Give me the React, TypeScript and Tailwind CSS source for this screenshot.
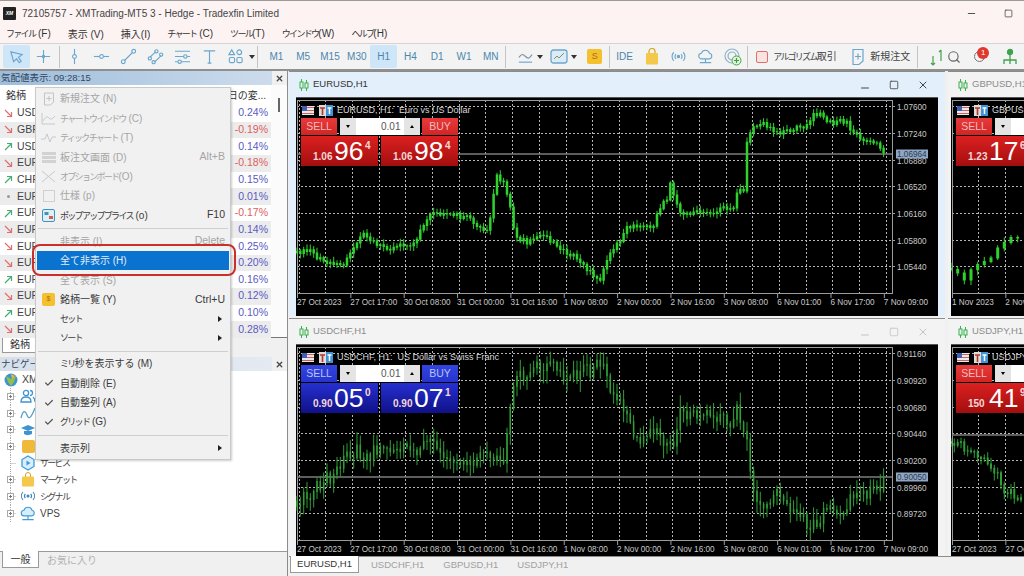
import React from 'react';
import { Check, Minus, Search, Square, X } from 'lucide-react';

type Pt = [number, number];

const eurusd: Pt[] = [[298,250],[310,248],[320,256],[332,262],[345,262],[357,240],[365,232],[375,240],[390,246],[400,244],[417,240],[426,218],[435,210],[450,212],[470,215],[480,224],[490,228],[497,172],[505,180],[512,208],[516,234],[528,240],[540,232],[552,238],[562,246],[575,254],[590,268],[600,280],[606,262],[612,248],[623,238],[627,224],[650,225],[655,222],[660,206],[668,196],[670,176],[675,195],[680,208],[688,212],[700,208],[712,210],[725,205],[735,204],[737,190],[745,188],[747,140],[755,125],[762,120],[770,125],[780,130],[790,128],[800,125],[810,122],[813,113],[822,112],[830,120],[836,122],[841,118],[848,120],[852,130],[860,135],[870,138],[880,142],[886,151]];
const usdchf: Pt[] = [[298,498],[310,492],[322,480],[333,472],[345,455],[358,446],[365,458],[375,446],[390,448],[400,446],[410,444],[420,450],[425,432],[433,434],[440,454],[450,456],[460,460],[470,460],[480,456],[490,450],[500,460],[505,456],[510,408],[517,368],[530,372],[540,362],[550,364],[560,366],[565,376],[575,372],[585,366],[592,368],[598,360],[606,358],[610,382],[618,396],[626,408],[635,432],[640,440],[650,432],[655,426],[665,442],[672,432],[676,450],[680,408],[695,413],[710,412],[720,415],[730,420],[737,404],[745,426],[748,432],[752,472],[757,495],[763,508],[773,492],[783,490],[790,505],[803,515],[808,522],[817,522],[827,502],[837,512],[855,492],[870,490],[880,484],[886,472]];
const gbpusd: Pt[] = [[951,266],[956,272],[961,275],[966,276],[970,272],[974,262],[981,258],[986,260],[992,252],[998,244],[1005,238],[1012,235],[1024,240]];
const usdjpy: Pt[] = [[951,438],[960,440],[968,450],[980,452],[990,460],[998,472],[1004,486],[1012,490],[1024,496]];

const buildCandles = (points: Pt[], step: number, noise: number, seed: number) => {
  const rnd = (i: number) => {
    const s = Math.sin(i * 12.9898 + seed) * 43758.5453;
    return s - Math.floor(s);
  };
  let wick = '';
  let body = '';
  let prev = points[0][1];
  let seg = 0;
  let i = 0;
  for (let x = points[0][0]; x <= points[points.length - 1][0]; x += step) {
    while (seg < points.length - 2 && x > points[seg + 1][0]) seg++;
    const [x1, y1] = points[seg];
    const [x2, y2] = points[seg + 1];
    const y = y1 + ((x - x1) / (x2 - x1)) * (y2 - y1) + (rnd(i) - 0.5) * noise;
    const top = Math.min(prev, y);
    const bottom = Math.max(prev, y) + 1;
    wick += `M${x.toFixed(1)} ${(top - rnd(i + 50) * noise * 0.9 - 1).toFixed(1)}V${(bottom + rnd(i + 90) * noise * 0.9 + 1).toFixed(1)}`;
    body += `M${x.toFixed(1)} ${top.toFixed(1)}V${bottom.toFixed(1)}`;
    prev = y;
    i++;
  }
  return { wick, body };
};

// kana in the reference font is narrow, so kana runs get a tighter setting
const Jp = ({ t }: { t: string }) => (
  <>
    {t.split(/([\u30A0-\u30FF]+)/).map((run, i) =>
      i % 2 ? (
        <span key={i} className="text-[9px] tracking-[-1.7px]">{run}</span>
      ) : (
        <span key={i}>{run}</span>
      ),
    )}
  </>
);

const timesA = ['27 Oct 2023', '27 Oct 17:00', '30 Oct 08:00', '31 Oct 00:00', '31 Oct 16:00', '1 Nov 08:00', '2 Nov 00:00', '2 Nov 16:00', '3 Nov 08:00', '6 Nov 01:00', '6 Nov 17:00', '7 Nov 09:00'];

interface ChartProps {
  left: number;
  top: number;
  data: Pt[];
  step: number;
  noise: number;
  seed: number;
  color: string;
  bodyWidth?: number;
  linePrice?: string;
  lineY?: number;
  prices?: string[];
  times: string[];
  gridStart: number;
  gridCount: number;
  frameRight: number;
}

const Chart = ({ left, top, data, step, noise, seed, color, bodyWidth = 2, linePrice, lineY, prices, times, gridStart, gridCount, frameRight }: ChartProps) => {
  const { wick, body } = buildCandles(data, step, noise, seed);
  const ys = [8, 35, 62, 88, 115, 142, 168];
  const xs = Array.from({ length: gridCount }, (_, i) => gridStart + i * 26.67);
  return (
    <svg className="block h-full w-full bg-black">
      <g fontSize="8.2" fill="#c9c9c9">
        {ys.map((y) => (
          <line key={y} x1="1" x2={frameRight} y1={y + 0.5} y2={y + 0.5} stroke="#b5b5b5" strokeDasharray="2 2" shapeRendering="crispEdges" />
        ))}
        {xs.map((x) => (
          <line key={x} x1={x} x2={x} y1="2" y2="196" stroke="#b5b5b5" strokeDasharray="2 2" shapeRendering="crispEdges" />
        ))}
        <rect x="1.5" y="2.5" width={frameRight - 1} height="193" fill="none" stroke="#9b9b9b" shapeRendering="crispEdges" />
        {lineY !== undefined && <line x1="1" x2={frameRight} y1={lineY} y2={lineY} stroke="#7d7d7d" strokeWidth="1.5" />}
        <g transform={`translate(${-left} ${-top})`}>
          <path d={wick} stroke={color} strokeWidth="1" fill="none" />
          <path d={body} stroke={color} strokeWidth={bodyWidth} fill="none" />
        </g>
        {prices?.map((p, i) => (
          <g key={p}>
            <line x1={frameRight} x2={frameRight + 3} y1={ys[i] + 0.5} y2={ys[i] + 0.5} stroke="#9b9b9b" />
            <text x={frameRight + 5} y={ys[i] + 3.5}>{p}</text>
          </g>
        ))}
        {linePrice && lineY !== undefined && (
          <g>
            <rect x={frameRight + 4} y={lineY - 4.5} width="32" height="9" fill="#8fa6c4" />
            <text x={frameRight + 5} y={lineY + 3} fill="#2c3a50">{linePrice}</text>
          </g>
        )}
        {times.map((t, i) => (
          <g key={t}>
            <line x1={1.5 + i * 53.35} x2={1.5 + i * 53.35} y1="196" y2="200" stroke="#9b9b9b" />
            <text x={1 + i * 53.35} y="206.5">{t}</text>
          </g>
        ))}
      </g>
    </svg>
  );
};

const FlagIcon = () => (
  <svg width="31" height="11" viewBox="0 0 31 11" className="shrink-0">
    <rect x="0" y="1" width="12" height="9" fill="#e9e9f2" />
    <path d="M0 2.500h12M0 5.500h12M0 8.500h12" stroke="#d2604f" strokeWidth="1.200" />
    <rect x="0" y="1" width="5" height="5" fill="#3d64b4" />
    <rect x="17" y="0" width="7" height="11" fill="#e0dcd8" />
    <path d="M18 3h5M20.500 3v7" stroke="#b5372c" strokeWidth="1.600" />
    <rect x="24" y="0" width="7" height="11" fill="#3f93d6" />
    <path d="M25.500 3h4M27.500 3v6" stroke="#fff" strokeWidth="1.500" />
  </svg>
);

const PriceBox = ({ big, small, sup, bg }: { big: string; small: string; sup: string; bg: string }) => (
  <div className={`relative h-[30px] w-[77px] ${bg}`}>
    <span className="absolute left-[12px] bottom-[4px] text-[10px] font-semibold leading-none text-[#f6d7d7]">{small}</span>
    <span className="absolute left-[33px] top-[1px] text-[26.500px] leading-[28px] text-white">{big}</span>
    <span className="absolute left-[64px] top-[5px] text-[10px] font-semibold leading-none text-[#f6d7d7]">{sup}</span>
  </div>
);

const OrderPanel = ({ tone, a, b }: { tone: 'red' | 'blue'; a: [string, string, string]; b: [string, string, string] }) => {
  const head = tone === 'red' ? 'bg-gradient-to-b from-[#e83a3a] to-[#d12424] text-[#f6bcbc]' : 'bg-gradient-to-b from-[#3344e0] to-[#2534cc] text-[#b9c2f6]';
  const box = tone === 'red' ? 'bg-gradient-to-b from-[#dc2020] to-[#a30e0e]' : 'bg-gradient-to-b from-[#2630d0] to-[#101088]';
  return (
    <div className="flex w-[157px] flex-col gap-px">
      <div className="flex h-[17px] items-stretch justify-between">
        <div className={`flex w-[36px] items-center justify-center text-[10.500px] ${head}`}>SELL</div>
        <div className="flex w-[80px] items-stretch bg-white text-[#333]">
          <div className="flex w-[16px] items-center justify-center bg-[#e4e4e4]">
            <span className="h-0 w-0 border-x-[2.500px] border-t-[3px] border-x-transparent border-t-black" />
          </div>
          <div className="flex-1 pr-[3px] text-right text-[10px] leading-[17px] text-[#555]">0.01</div>
          <div className="flex w-[16px] items-center justify-center bg-[#e4e4e4]">
            <span className="h-0 w-0 border-x-[2.500px] border-b-[3px] border-x-transparent border-b-black" />
          </div>
        </div>
        <div className={`flex w-[36px] items-center justify-center text-[10.500px] ${head}`}>BUY</div>
      </div>
      <div className="flex justify-between">
        <PriceBox bg={box} small={a[0]} big={a[1]} sup={a[2]} />
        <PriceBox bg={box} small={b[0]} big={b[1]} sup={b[2]} />
      </div>
    </div>
  );
};

const CandleIcon = () => (
  <svg width="10" height="12" viewBox="0 0 10 12" className="shrink-0">
    <path d="M2.500 0v12M7.500 1v11" stroke="#3caf50" />
    <rect x="1" y="3" width="3" height="6" fill="#e8f5e8" stroke="#3caf50" />
    <rect x="6" y="4" width="3" height="5" fill="#e8f5e8" stroke="#3caf50" />
  </svg>
);

const ChartWindow = ({ title, active, side, heading, panel, children }: { title: string; active?: boolean; side?: boolean; heading: string; panel: React.ReactNode; children: React.ReactNode }) => (
  <div className={`flex min-h-0 flex-col border-t border-[#8c8c8c] ${active ? 'bg-[#e3f0fb]' : 'bg-[#f3f3f3]'}`}>
    <div className="flex h-[25px] shrink-0 items-center pl-[10px]">
      <CandleIcon />
      <span className={`ml-[4px] text-[9.500px] ${active ? 'text-[#333]' : 'text-[#8b8b8b]'}`}>{title}</span>
      {!side && (
        <div className={`ml-auto flex items-center gap-[18px] pr-[16px] ${active ? 'text-[#444]' : 'text-[#c4c4c4]'}`}>
          <Minus size={12} className="translate-y-[3px]" />
          <Square size={10} strokeWidth={2} />
          <X size={12} strokeWidth={2} />
        </div>
      )}
    </div>
    <div className={`relative min-h-0 flex-1 overflow-hidden border-t border-[#555] bg-black ${side ? 'ml-[3px]' : 'mx-[7px]'}`}>
      {children}
      <div className="absolute left-[6px] top-[6px] flex items-center gap-[4px] whitespace-pre text-[9px] leading-[12px] text-[#d9d9d9]">
        <FlagIcon />
        <span>{heading}</span>
      </div>
      <div className="absolute left-[5px] top-[20px]">{panel}</div>
    </div>
  </div>
);

const Sep = ({ className = '' }: { className?: string }) => <div className={`h-[22px] w-px shrink-0 bg-[#c4c4c4] ${className}`} />;

const Caret = () => <span className="h-0 w-0 border-x-[3px] border-t-[4px] border-x-transparent border-t-[#333]" />;

const Tool = ({ w = 'w-[27px]', active, children }: { w?: string; active?: boolean; children: React.ReactNode }) => (
  <div className={`flex h-[23px] shrink-0 items-center justify-center rounded-[2px] ${w} ${active ? 'bg-[#cfe6f9]' : ''}`}>{children}</div>
);

const blue = '#6ba6cd';
const Ico = ({ children, size = 17 }: { children: React.ReactNode; size?: number }) => (
  <svg width={size} height={size} viewBox="0 0 18 18" fill="none" stroke={blue} strokeWidth="1.200">{children}</svg>
);

const frames = ['M1', 'M5', 'M15', 'M30', 'H1', 'H4', 'D1', 'W1', 'MN'];

const Toolbar = () => (
  <div className="flex h-[26px] shrink-0 items-center border-t border-[#d4d4d4] bg-[#f3f3f3] pl-[3px]">
    <Tool active>
      <Ico><path d="M3 4l12 3-4 3 3 4-2 1.500-3-4-3 3z" /></Ico>
    </Tool>
    <Tool>
      <Ico><path d="M9 2v14M2 9h14" /><circle cx="9" cy="9" r="1.200" fill={blue} /></Ico>
    </Tool>
    <Sep className="mx-[1.500px]" />
    <Tool>
      <Ico><path d="M9 1v16" /><circle cx="9" cy="9" r="2" fill="#fff" /></Ico>
    </Tool>
    <Tool>
      <Ico><path d="M1 9h16" /><circle cx="9" cy="9" r="2" fill="#fff" /></Ico>
    </Tool>
    <Tool>
      <Ico><path d="M4.500 13.500l9-9" /><circle cx="3.500" cy="14.500" r="2" /><circle cx="14.500" cy="3.500" r="2" /></Ico>
    </Tool>
    <Tool>
      <Ico><path d="M3 10l6-6M8 15l7-7" /><circle cx="3" cy="11" r="1.700" /><circle cx="10" cy="3.500" r="1.700" /><circle cx="7" cy="15" r="1.700" /><circle cx="15" cy="7" r="1.700" /></Ico>
    </Tool>
    <Tool>
      <Ico><path d="M1 3.500h16M1 9h9M14 9h3M1 14.500h3M8 14.500h9" /><circle cx="12" cy="9" r="1.800" /><circle cx="6" cy="14.500" r="1.800" /></Ico>
    </Tool>
    <Tool>
      <Ico><path d="M3 3h12M9 3v13M7 16h4" /></Ico>
    </Tool>
    <Tool w="w-[24px]">
      <Ico><path d="M5 2l3 5H2zM13 2a2.500 2.500 0 100 5 2.500 2.500 0 000-5z" /><rect x="2.500" y="10" width="5.500" height="5.500" rx="1.500" /><rect x="10.500" y="10" width="5.500" height="5.500" rx="1.500" /></Ico>
    </Tool>
    <Tool w="w-[9px]"><Caret /></Tool>
    <Sep className="ml-[1px] mr-[5px]" />
    <div className="flex">
      {frames.map((f) => (
        <Tool key={f} active={f === 'H1'} w="w-[26.800px]">
          <span className="text-[10px] text-[#4b87ad]">{f}</span>
        </Tool>
      ))}
    </div>
    <Sep className="ml-[1px] mr-[9px]" />
    <Tool w="w-[20px]">
      <Ico><path d="M2 10c3-4 4-4 7-1s4 2 7-2" stroke="#7a8fa0" /><path d="M2 15h14" /></Ico>
    </Tool>
    <Tool w="w-[9px]"><Caret /></Tool>
    <div className="ml-[5px]">
      <Tool w="w-[20px]">
        <svg width="20" height="18" viewBox="0 0 20 18" fill="none">
          <rect x="2" y="2" width="16" height="13" rx="2.500" fill="#dcebf5" stroke={blue} strokeWidth="1.300" />
          <path d="M5 11l3-3 2 2 5-5" stroke="#6c9a72" />
        </svg>
      </Tool>
    </div>
    <Tool w="w-[9px]"><Caret /></Tool>
    <div className="ml-[4px]">
      <Tool w="w-[25px]">
        <span className="flex h-[15px] w-[15px] items-center justify-center rounded-[2px] bg-[#f4c02e] text-[9px] leading-none text-[#b26a10]">S</span>
      </Tool>
    </div>
    <Sep className="mx-[1.500px]" />
    <Tool w="w-[27px]"><span className="text-[10px] text-[#4b87ad]">IDE</span></Tool>
    <Tool>
      <svg width="16" height="18" viewBox="0 0 16 18" fill="none">
        <path d="M5 6V3.500a3 3 0 016 0V6" stroke="#d8a520" strokeWidth="1.200" />
        <rect x="2" y="5" width="12" height="11.500" rx="1" fill="#f4c84a" />
      </svg>
    </Tool>
    <Tool>
      <Ico><path d="M4 4.500a6.500 6.500 0 000 9M14 4.500a6.500 6.500 0 010 9M6.300 6.500a3.500 3.500 0 000 5M11.700 6.500a3.500 3.500 0 010 5" /><circle cx="9" cy="9" r="1.200" fill={blue} /></Ico>
    </Tool>
    <Tool>
      <Ico><path d="M5 11.500a3 3 0 01-.3-6A4.500 4.500 0 0113.300 5.600a3 3 0 01-.3 5.900zM9 11.500V15M3 15.500h12" /></Ico>
    </Tool>
    <Tool>
      <svg width="18" height="18" viewBox="0 0 18 18" fill="none">
        <circle cx="8" cy="8" r="7" stroke="#8fb1c8" strokeWidth="1.200" />
        <circle cx="8" cy="8" r="4" stroke="#8fb1c8" strokeWidth="1.200" />
        <circle cx="12.500" cy="12.500" r="4.500" fill="#dff3df" stroke="#45a845" />
        <path d="M12.500 10v5M10 12.500h5" stroke="#3b9f3b" strokeWidth="1.200" />
      </svg>
    </Tool>
    <Sep className="mx-[1px]" />
    <div className="ml-[2px]">
      <Tool w="w-[22px]">
        <span className="h-[12px] w-[12px] rounded-[2px] border border-[#de6f6f] bg-[#fbe3e0]" />
      </Tool>
    </div>
    <span className="w-[73px] shrink-0 whitespace-nowrap text-[10px] text-[#444]"><Jp t="アルゴリズム取引" /></span>
    <Tool w="w-[24px]">
      <svg width="14" height="18" viewBox="0 0 14 18" fill="none" stroke={blue} strokeWidth="1.200">
        <path d="M2 1.500h10V13l-4 3.500H2zM7 5.500v6M4 8.500h6" />
      </svg>
    </Tool>
    <span className="w-[44px] shrink-0 whitespace-nowrap text-[10px] text-[#444]">新規注文</span>
    <Sep className="ml-[3px] mr-[8px]" />
    <Tool w="w-[24px]">
      <svg width="18" height="18" viewBox="0 0 18 18" fill="none" stroke="#3fa34d" strokeWidth="1.200">
        <path d="M4 17V8M2 15l2 2 2-2M12 13V2M10 4l2-2" />
      </svg>
    </Tool>
    <div className="-ml-[5px]">
      <Tool w="w-[18px]"><Search size={14} color="#666" /></Tool>
    </div>
    <div className="relative ml-[6px] flex h-[23px] w-[20px] shrink-0 items-center justify-center">
      <span className="h-[11px] w-[11px] rounded-full border border-[#777]" />
      <span className="absolute right-[0px] top-[2px] flex h-[12px] w-[12px] items-center justify-center rounded-full bg-[#e2372f] text-[8px] leading-none text-white">1</span>
    </div>
    <Tool w="w-[42px]">
      <svg width="16" height="18" viewBox="0 0 16 18" fill="none" stroke="#3fa34d" strokeWidth="1.300">
        <circle cx="8" cy="4" r="2.500" fill="#3fa34d" />
        <path d="M8 7v4M2 16v-4h12v4M8 11v5" />
      </svg>
    </Tool>
  </div>
);

const menuItems = ['ファイル (F)', '表示 (V)', '挿入(I)', 'チャート (C)', 'ツール(T)', 'ウインドウ(W)', 'ヘルプ(H)'];

const rows: [string, string, 'up' | 'down' | 'dot'][] = [
  ['USDJPY', '0.24%', 'down'],
  ['GBPUSD', '-0.19%', 'down'],
  ['USDCHF', '0.14%', 'up'],
  ['EURUSD', '-0.18%', 'down'],
  ['CHFJPY', '0.15%', 'up'],
  ['EURCHF', '0.01%', 'dot'],
  ['EURGBP', '-0.17%', 'up'],
  ['EURJPY', '0.14%', 'down'],
  ['EURAUD', '0.25%', 'down'],
  ['EURCAD', '0.20%', 'down'],
  ['EURNZD', '0.16%', 'up'],
  ['EURSGD', '0.12%', 'down'],
  ['EURHKD', '0.10%', 'up'],
  ['EURNOK', '0.28%', 'down'],
];

const Arrow = ({ dir }: { dir: 'up' | 'down' | 'dot' }) => {
  if (dir === 'dot') return <span className="mx-[3px] h-[3px] w-[3px] shrink-0 rounded-full bg-[#999]" />;
  const c = dir === 'up' ? '#45ad72' : '#df6f6f';
  return (
    <svg width="9" height="9" viewBox="0 0 9 9" fill="none" stroke={c} strokeWidth="1.200" className="shrink-0">
      {dir === 'up' ? <path d="M1 8l6.500-6.500M3 1.500h4.500V6" /> : <path d="M1 1l6.500 6.500M3 7.500h4.500V3" />}
    </svg>
  );
};

const Watch = () => (
  <div className="relative flex h-[252px] shrink-0 bg-white">
    <div className="w-[271px]">
      <div className="flex h-[20px] items-center justify-between pl-[6px] pr-[5px] text-[10px] text-[#333]">
        <span>銘柄</span>
        <span>日の変...</span>
      </div>
      {rows.map(([name, pct, dir], i) => (
        <div key={i} className={`flex h-[16.650px] items-center justify-between pl-[4px] pr-[3px] text-[10.500px] ${i % 2 ? 'bg-[#ececec]' : 'bg-white'}`}>
          <span className="flex items-center gap-[4px] text-[#444]">
            <Arrow dir={dir} />
            {name}
          </span>
          <span className={pct.startsWith('-') ? 'text-[#de5e5e]' : 'text-[#5a5ac4]'}>{pct}</span>
        </div>
      ))}
    </div>
    <div className="flex flex-1 justify-center bg-[#fbfbfb] pt-[13px]">
      <div className="h-[14px] w-[2px] bg-[#666]" />
    </div>
  </div>
);

const PanelHead = ({ label, dim }: { label: string; dim?: boolean }) => (
  <div className="flex h-[14px] shrink-0 items-center">
    <div className={`flex h-full w-[272px] items-center whitespace-nowrap bg-gradient-to-r pl-[1px] text-[9.500px] text-[#33475c] ${dim ? 'from-[#d7e0ea] to-[#e3eaf2]' : 'from-[#9dbddc] to-[#cddcec]'}`}>
      {label}
    </div>
    <div className="flex flex-1 items-center justify-center">
      <X size={9} strokeWidth={3.500} color="#444" />
    </div>
  </div>
);

const Tree = ({ box = true }: { box?: boolean }) => (
  <svg width="17" height="17" viewBox="0 0 17 17" fill="none" className="shrink-0">
    <path d="M10.500 0v17M10.500 8.500h6" stroke="#aaa" strokeDasharray="1 1" />
    {box && (
      <g>
        <rect x="7.500" y="5.500" width="6" height="6" fill="#fff" stroke="#aaa" />
        <path d="M9 8.500h3M10.500 7v3" stroke="#777" />
      </g>
    )}
  </svg>
);

const navRows: { label: string; box?: boolean; icon: React.ReactNode }[] = [
  {
    label: 'アカウント',
    icon: (
      <svg width="16" height="14" viewBox="0 0 16 14" fill="none" stroke="#3f93d0" strokeWidth="1.300">
        <circle cx="6" cy="4" r="2.600" /><path d="M1 13c0-3 2-5 5-5s5 2 5 5zM10 1.500a2.500 2.500 0 010 5M13 8c1.500 1 2 3 2 5" />
      </svg>
    ),
  },
  {
    label: '指標',
    icon: (
      <svg width="16" height="14" viewBox="0 0 16 14" fill="none" stroke="#55a1c5" strokeWidth="1.300"><path d="M1 12c2-8 4-8 6-3s4 3 8-7" /></svg>
    ),
  },
  {
    label: 'エキスパート',
    icon: (
      <svg width="16" height="14" viewBox="0 0 16 14"><path d="M1 5l7-3 7 3-7 3z" fill="#3f93d0" /><path d="M4 8v3c2 1.500 5 1.500 8 0V8" fill="#3f93d0" /></svg>
    ),
  },
  {
    label: 'スクリプト',
    icon: <span className="h-[13px] w-[13px] rounded-[2px] bg-[#f0b93a]" />,
  },
  {
    label: 'サービス',
    box: false,
    icon: (
      <svg width="16" height="16" viewBox="0 0 16 16" fill="#d8eefa" stroke="#3f9ad6" strokeWidth="1.300">
        <path d="M8 1l6 3.500v7L8 15l-6-3.500v-7z" /><path d="M6.500 5.500l4 2.500-4 2.500z" fill="#3f9ad6" stroke="none" />
      </svg>
    ),
  },
  {
    label: 'マーケット',
    icon: (
      <svg width="14" height="15" viewBox="0 0 14 15" fill="none">
        <path d="M4.500 5V3a2.500 2.500 0 015 0v2" stroke="#d8a520" />
        <rect x="1" y="4.500" width="12" height="10" rx="1" fill="#f4c84a" />
      </svg>
    ),
  },
  {
    label: 'シグナル',
    icon: (
      <svg width="16" height="12" viewBox="0 0 16 12" fill="none" stroke="#3f7fb8" strokeWidth="1.100">
        <path d="M3 2a6 6 0 000 8M13 2a6 6 0 010 8M5.300 3.800a3.500 3.500 0 000 4.400M10.700 3.800a3.500 3.500 0 010 4.400" /><circle cx="8" cy="6" r="1" fill="#3f7fb8" />
      </svg>
    ),
  },
  {
    label: 'VPS',
    icon: (
      <svg width="17" height="15" viewBox="0 0 17 15" fill="#d8eefa" stroke="#3f9ad6" strokeWidth="1.200">
        <path d="M4.500 10a3 3 0 01-.3-6A4.500 4.500 0 0112.800 4.100 3 3 0 0112.500 10z" /><path d="M8.500 10v3.500M2.500 14h12" fill="none" />
      </svg>
    ),
  },
];

const Navigator = () => (
  <div className="flex min-h-0 flex-1 flex-col bg-white">
    <div className="flex h-[17px] shrink-0 items-center bg-white pl-[4px]">
      <svg width="14" height="14" viewBox="0 0 14 14" className="shrink-0">
        <circle cx="7" cy="7" r="6.500" fill="#3f93d0" />
        <path d="M2 3l5 3 5-3-2 6-3 4-3-4z" fill="#8fc04a" />
        <path d="M7 1l4 2-3 3z" fill="#f1b62e" />
      </svg>
      <span className="ml-[4px] whitespace-nowrap text-[10.500px] text-[#444]">XMTrading-MT5 3</span>
    </div>
    {navRows.map((r) => (
      <div key={r.label} className="flex h-[16.700px] shrink-0 items-center">
        <Tree box={r.box ?? true} />
        <span className="ml-[3px] flex w-[16px] shrink-0 items-center justify-center">{r.icon}</span>
        <span className="ml-[4px] whitespace-nowrap text-[10px] text-[#444]"><Jp t={r.label} /></span>
      </div>
    ))}
    <div className="flex-1" />
    <div className="h-[25px] shrink-0 bg-[#f0f0f0]">
      <div className="flex h-[17px] border-t border-[#9a9a9a] pl-[2px]">
        <div className="-mt-px flex w-[37px] items-center justify-center border-x border-b border-[#9a9a9a] bg-white text-[10px] text-[#333]">一般</div>
        <div className="ml-[8px] flex items-center text-[10px] text-[#b0b0b0]">お気に入り</div>
      </div>
    </div>
  </div>
);

type MenuEntry = { t: string; key?: string; off?: boolean; sel?: boolean; check?: boolean; sub?: boolean; icon?: React.ReactNode } | 'sep';

const grayBox = <span className="h-[12px] w-[12px] border border-[#cfcfcf]" />;

const menu: MenuEntry[] = [
  { t: '新規注文 (N)', off: true, icon: <svg width="12" height="14" viewBox="0 0 12 14" fill="none" stroke="#c4c4c4"><path d="M1.500 1h9v9l-3 3h-6zM6 4v5M3.500 6.500h5" /></svg> },
  { t: 'チャートウインドウ (C)', off: true, icon: <svg width="15" height="13" viewBox="0 0 15 13" fill="none" stroke="#c8c8c8"><path d="M1 1v11h13M2 9c3-5 4-5 6-3s3 1 6-2" /></svg> },
  { t: 'ティックチャート (T)', off: true, icon: <svg width="15" height="11" viewBox="0 0 15 11" fill="none" stroke="#c8c8c8"><path d="M0 7h4l2-5 3 8 2-5h4" /></svg> },
  { t: '板注文画面 (D)', key: 'Alt+B', off: true, icon: <svg width="14" height="11" viewBox="0 0 14 11" fill="#d2d2d2"><rect width="14" height="3" /><rect y="4" width="14" height="3" /><rect y="8" width="14" height="3" /></svg> },
  { t: 'オプションボード(O)', off: true, icon: <svg width="15" height="13" viewBox="0 0 15 13" fill="none" stroke="#c8c8c8"><path d="M1 1l13 11M1 12L14 1" /></svg> },
  { t: '仕様 (p)', off: true, icon: grayBox },
  { t: 'ポップアッププライス (o)', key: 'F10', icon: <svg width="13" height="13" viewBox="0 0 13 13"><rect x=".5" y=".5" width="12" height="12" rx="1.500" fill="#dff0f5" stroke="#3f93c4" /><rect x="2.500" y="3" width="4" height="3" fill="#3f93c4" /><rect x="7" y="7" width="4" height="3" fill="#d2604f" /></svg> },
  'sep',
  { t: '非表示 (I)', key: 'Delete', off: true },
  { t: '全て非表示 (H)', sel: true },
  { t: '全て表示 (S)', off: true },
  { t: '銘柄一覧 (Y)', key: 'Ctrl+U', icon: <span className="flex h-[13px] w-[13px] items-center justify-center rounded-[2px] bg-[#f4c02e] text-[7px] text-[#b26a10]">$</span> },
  { t: 'セット', sub: true },
  { t: 'ソート', sub: true },
  'sep',
  { t: 'ミリ秒を表示する (M)' },
  { t: '自動削除 (E)', check: true },
  { t: '自動整列 (A)', check: true },
  { t: 'グリッド (G)', check: true },
  'sep',
  { t: '表示列', sub: true },
];

const ContextMenu = () => (
  <div className="absolute left-[35px] top-[87px] w-[196px] border border-[#c9c9c9] bg-[#f1f1f1] px-[1px] pt-[1.300px] pb-[1px] shadow-[1px_1px_2px_rgba(0,0,0,0.2)]">
    {menu.map((m, i) =>
      m === 'sep' ? (
        <div key={i} className="flex h-[6.500px] items-center px-[1px]">
          <div className="h-px w-full bg-[#cfcfcf]" />
        </div>
      ) : (
        <div key={i} className={`flex h-[19.400px] items-center pr-[4px] text-[10px] ${m.sel ? 'bg-[#0a72cf] text-[#e4effa]' : m.off ? 'text-[#a5a5a5]' : 'text-[#3a3a3a]'}`}>
          <span className="flex w-[23px] shrink-0 items-center justify-center">
            {m.check ? <Check size={10} strokeWidth={3} color="#555" /> : m.icon}
          </span>
          <span className="whitespace-nowrap"><Jp t={m.t} /></span>
          {m.key && <span className="ml-auto text-[10.500px]">{m.key}</span>}
          {m.sub && <span className="ml-auto mr-[3px] h-0 w-0 border-y-[3px] border-l-[4px] border-y-transparent border-l-[#222]" />}
        </div>
      ),
    )}
  </div>
);

export default function App() {
  return (
    <div className="relative flex h-[576px] w-[1024px] flex-col overflow-hidden bg-[#f0f0f0] font-['Liberation_Sans','Noto_Sans_CJK_JP',sans-serif]">
      {/* title + menu */}
      <div className="shrink-0 border-t border-[#9a9a9a] bg-[#fdf3f3]">
        <div className="flex h-[24px] items-center pl-[3px]">
          <div className="flex h-[13px] w-[13px] items-center justify-center rounded-[1px] bg-[#222] text-[5px] font-bold italic leading-none text-white">XM</div>
          <span className="ml-[6px] whitespace-nowrap text-[10px] text-[#444]">72105757 - XMTrading-MT5 3 - Hedge - Tradexfin Limited</span>
          <div className="ml-auto flex items-center gap-[27px] pr-[11px] text-[#444]">
            <Minus size={11} />
            <Square size={9} strokeWidth={2} />
          </div>
        </div>
        <div className="flex h-[18px] items-center gap-[17px] pl-[6px] text-[10px] text-[#333]">
          {menuItems.map((m) => (
            <span key={m} className="whitespace-nowrap"><Jp t={m} /></span>
          ))}
        </div>
      </div>

      <Toolbar />

      {/* workspace */}
      <div className="flex min-h-0 flex-1 border-t-2 border-[#8f8f8f]">
        <div className="flex w-[288px] shrink-0 flex-col border-r border-[#8c8c8c]">
          <PanelHead label="気配値表示: 09:28:15" />
          <Watch />
          <div className="flex h-[20px] shrink-0 border-t border-[#777] pl-[2px]">
            <div className="-mt-px flex h-[16px] w-[36px] items-center justify-center border-x border-b border-[#999] bg-white text-[10px] text-[#333]">銘柄</div>
          </div>
          <PanelHead label="ナビゲーター" dim />
          <Navigator />
        </div>

        <div className="flex min-w-0 flex-1 flex-col overflow-hidden pl-[1px]">
          <div className="grid min-h-0 flex-1 grid-cols-[656px_160px] grid-rows-[245px_1fr] gap-x-[3px] gap-y-[2px]">
            <ChartWindow active title="EURUSD,H1" heading="EURUSD, H1:  Euro vs US Dollar" panel={<OrderPanel tone="red" a={['1.06', '96', '4']} b={['1.06', '98', '4']} />}>
              <Chart left={297} top={96} data={eurusd} step={3.333} noise={4.500} seed={3} color="#2ed12e" bodyWidth={2.500} lineY={56} linePrice="1.06964" prices={['1.07600', '1.07240', '1.06880', '1.06520', '1.06160', '1.05800', '1.05440']} times={timesA} gridStart={3.300} gridCount={23} frameRight={596} />
            </ChartWindow>
            <ChartWindow side title="GBPUSD,H1" heading="GBPUSD, H1: Great Britain Pound vs US Dollar" panel={<OrderPanel tone="red" a={['1.23', '17', '6']} b={['1.23', '19', '6']} />}>
              <Chart left={951} top={96} data={gbpusd} step={6.667} noise={5} seed={9} color="#2ed12e" bodyWidth={3} times={['1 Nov 2023', '2 Nov 00:00']} gridStart={1.300} gridCount={6} frameRight={400} />
            </ChartWindow>
            <ChartWindow title="USDCHF,H1" heading="USDCHF, H1:  US Dollar vs Swiss Franc" panel={<OrderPanel tone="blue" a={['0.90', '05', '0']} b={['0.90', '07', '1']} />}>
              <Chart left={297} top={342} data={usdchf} step={3.333} noise={13} seed={5} color="#2f9e35" bodyWidth={1.500} lineY={132} linePrice="0.90050" prices={['0.91160', '0.90920', '0.90680', '0.90440', '0.90200', '0.89960', '0.89720']} times={timesA} gridStart={3.300} gridCount={23} frameRight={596} />
            </ChartWindow>
            <ChartWindow side title="USDJPY,H1" heading="USDJPY, H1: US Dollar vs Japanese Yen" panel={<OrderPanel tone="red" a={['150', '41', '9']} b={['150', '43', '9']} />}>
              <Chart left={951} top={342} data={usdjpy} step={3.333} noise={7} seed={7} color="#2f9e35" lineY={90} times={['27 Oct 2023', '27 Oct 17:00']} gridStart={1.300} gridCount={6} frameRight={400} />
            </ChartWindow>
          </div>
          <div className="flex h-[20px] shrink-0 items-start border-t border-[#8c8c8c] pl-[1px] text-[9.500px] text-[#a0a0a0]">
            <div className="-mt-px flex h-[17px] w-[69px] items-center justify-center border-x border-b border-[#999] bg-white text-[#333]">EURUSD,H1</div>
            <div className="flex h-[16px] items-center gap-[19px] pl-[12px]">
              <span>USDCHF,H1</span>
              <span>GBPUSD,H1</span>
              <span>USDJPY,H1</span>
            </div>
          </div>
        </div>
      </div>

      <ContextMenu />
      {/* red marker around the highlighted item */}
      <div className="absolute left-[32px] top-[244px] h-[32px] w-[204px] rounded-[8px] border-[2.500px] border-[#c9302c]" />
    </div>
  );
}
